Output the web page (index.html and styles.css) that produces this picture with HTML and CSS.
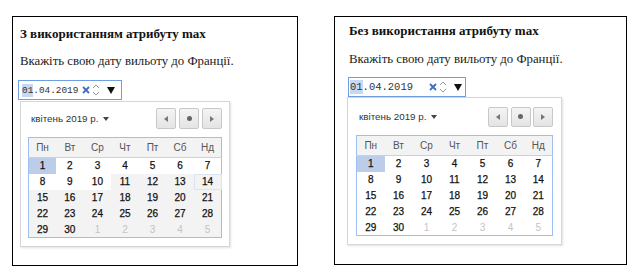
FILE: index.html
```html
<!DOCTYPE html>
<html lang="uk">
<head>
<meta charset="utf-8">
<link rel="stylesheet" href="styles.css">
</head>
<body>
<div class="page">
  <section class="panel panel-a">
    <h3 class="title">З використанням атрибуту max</h3>
    <p class="prompt">Вкажіть свою дату вильоту до Франції.</p>
    <div class="date-input">
      <span class="value"><span class="sel">01</span>.04.2019</span>
      <svg class="clear" width="8" height="8" viewBox="0 0 8 8"><path d="M1 1L7 7M7 1L1 7" stroke="#3d6fc4" stroke-width="1.8"/></svg>
      <svg class="spin" width="8" height="14" viewBox="0 0 8 14"><path d="M1 5L4 2L7 5M1 9L4 12L7 9" fill="none" stroke="#9a9a9a" stroke-width="1"/></svg>
      <svg class="drop" width="8" height="7" viewBox="0 0 8 7"><path d="M0 0H8L4 7Z" fill="#111"/></svg>
    </div>
    <div class="picker">
      <div class="picker-head">
        <span class="month">квітень 2019 р. <svg class="mcaret" width="6" height="4" viewBox="0 0 6 4"><path d="M0 0H6L3 4Z" fill="#444"/></svg></span>
        <div class="nav">
          <span class="nbtn"><svg width="4" height="6" viewBox="0 0 4 6"><path d="M4 0V6L0 3Z" fill="#777"/></svg></span>
          <span class="nbtn"><svg width="5" height="5" viewBox="0 0 5 5"><circle cx="2.5" cy="2.5" r="2.5" fill="#666"/></svg></span>
          <span class="nbtn"><svg width="4" height="6" viewBox="0 0 4 6"><path d="M0 0V6L4 3Z" fill="#777"/></svg></span>
        </div>
      </div>
      <table class="cal">
        <thead><tr><th>Пн</th><th>Вт</th><th>Ср</th><th>Чт</th><th>Пт</th><th>Сб</th><th>Нд</th></tr></thead>
        <tbody>
          <tr><td class="cur">1</td><td>2</td><td>3</td><td>4</td><td>5</td><td>6</td><td>7</td></tr>
          <tr><td>8</td><td>9</td><td>10</td><td class="off">11</td><td class="off">12</td><td class="off">13</td><td class="off hov">14</td></tr>
          <tr><td class="off">15</td><td class="off">16</td><td class="off">17</td><td class="off">18</td><td class="off">19</td><td class="off">20</td><td class="off">21</td></tr>
          <tr><td class="off">22</td><td class="off">23</td><td class="off">24</td><td class="off">25</td><td class="off">26</td><td class="off">27</td><td class="off">28</td></tr>
          <tr><td class="off">29</td><td class="off">30</td><td class="off next">1</td><td class="off next">2</td><td class="off next">3</td><td class="off next">4</td><td class="off next">5</td></tr>
        </tbody>
      </table>
    </div>
  </section>

  <section class="panel panel-b">
    <h3 class="title">Без використання атрибуту max</h3>
    <p class="prompt">Вкажіть свою дату вильоту до Франції.</p>
    <div class="date-input">
      <span class="value"><span class="sel">01</span>.04.2019</span>
      <svg class="clear" width="8" height="8" viewBox="0 0 8 8"><path d="M1 1L7 7M7 1L1 7" stroke="#3d6fc4" stroke-width="1.8"/></svg>
      <svg class="spin" width="8" height="14" viewBox="0 0 8 14"><path d="M1 5L4 2L7 5M1 9L4 12L7 9" fill="none" stroke="#9a9a9a" stroke-width="1"/></svg>
      <svg class="drop" width="8" height="7" viewBox="0 0 8 7"><path d="M0 0H8L4 7Z" fill="#111"/></svg>
    </div>
    <div class="picker">
      <div class="picker-head">
        <span class="month">квітень 2019 р. <svg class="mcaret" width="6" height="4" viewBox="0 0 6 4"><path d="M0 0H6L3 4Z" fill="#444"/></svg></span>
        <div class="nav">
          <span class="nbtn"><svg width="4" height="6" viewBox="0 0 4 6"><path d="M4 0V6L0 3Z" fill="#777"/></svg></span>
          <span class="nbtn"><svg width="5" height="5" viewBox="0 0 5 5"><circle cx="2.5" cy="2.5" r="2.5" fill="#666"/></svg></span>
          <span class="nbtn"><svg width="4" height="6" viewBox="0 0 4 6"><path d="M0 0V6L4 3Z" fill="#777"/></svg></span>
        </div>
      </div>
      <table class="cal">
        <thead><tr><th>Пн</th><th>Вт</th><th>Ср</th><th>Чт</th><th>Пт</th><th>Сб</th><th>Нд</th></tr></thead>
        <tbody>
          <tr><td class="cur">1</td><td>2</td><td>3</td><td>4</td><td>5</td><td>6</td><td>7</td></tr>
          <tr><td>8</td><td>9</td><td>10</td><td>11</td><td>12</td><td>13</td><td>14</td></tr>
          <tr><td>15</td><td>16</td><td>17</td><td>18</td><td>19</td><td>20</td><td>21</td></tr>
          <tr><td>22</td><td>23</td><td>24</td><td>25</td><td>26</td><td>27</td><td>28</td></tr>
          <tr><td>29</td><td>30</td><td class="next">1</td><td class="next">2</td><td class="next">3</td><td class="next">4</td><td class="next">5</td></tr>
        </tbody>
      </table>
    </div>
  </section>
</div>
</body>
</html>
```

FILE: styles.css
```css
html, body {
  margin: 0;
  padding: 0;
  background: #fff;
}

.page {
  display: flex;
  align-items: flex-start;
  gap: 36px;
  padding: 16px 0 0 12px;
}

.panel {
  box-sizing: border-box;
  border: 1px solid #000;
  display: flex;
  flex-direction: column;
  align-items: flex-start;
}

.panel-a {
  width: 286px;
  height: 250px;
  padding: 9px 0 0 5px;
}

.panel-b {
  width: 293px;
  height: 249px;
  padding: 6px 0 0 13px;
}

.title {
  margin: 0;
  font-family: "Liberation Serif", serif;
  font-weight: bold;
  font-size: 13px;
  line-height: 16px;
  color: #111;
}

.prompt {
  margin: 0;
  font-family: "Liberation Serif", serif;
  font-size: 12.8px;
  line-height: 16px;
  color: #222;
}

.panel-a .title, .panel-a .prompt { margin-left: 2px; }
.panel-a .prompt { margin-top: 11px; }
.panel-a .date-input { margin-top: 11px; }

.panel-b .title, .panel-b .prompt { margin-left: 1px; }
.panel-b .prompt { margin-top: 12px; }
.panel-b .date-input { margin-top: 10px; }

.date-input {
  box-sizing: border-box;
  height: 20px;
  border: 1px solid #6f9ee3;
  display: flex;
  align-items: center;
  font-family: "Liberation Mono", monospace;
  color: #333;
}

.panel-a .date-input { width: 104px; padding-left: 3px; font-size: 9.4px; }
.panel-b .date-input { width: 118px; padding-left: 1px; font-size: 10.5px; }

.value { display: inline-block; }
.panel-a .value { width: 60px; }
.panel-b .value { width: 79px; }

.sel {
  background: #c6d8f3;
  padding: 1px 0;
}

.clear { display: block; }
.spin { display: block; margin-left: 2px; }
.drop { display: block; margin-left: 7px; }

.picker {
  box-sizing: border-box;
  border: 1px solid #d6d6d6;
  box-shadow: 1px 1px 2px rgba(0, 0, 0, 0.12);
  background: #fff;
  font-family: "Liberation Sans", Arial, sans-serif;
}

.panel-a .picker { width: 210px; margin: 1px 0 0 2px; padding: 6px 7px 8px 7px; }
.panel-b .picker { width: 215px; margin: 0 0 0 -1px; padding: 8px 8px 8px 8px; }

.picker-head {
  display: flex;
  align-items: center;
  justify-content: space-between;
  height: 21px;
  margin-bottom: 8px;
}

.month {
  font-size: 9.8px;
  color: #333;
  padding-left: 3px;
  display: flex;
  align-items: center;
  gap: 5px;
}

.nav {
  display: flex;
  gap: 3px;
}
.panel-b .nav { gap: 2.5px; }

.nbtn {
  box-sizing: border-box;
  width: 20px;
  height: 21px;
  border: 1px solid #c8c8c8;
  border-radius: 2px;
  background: linear-gradient(#f4f4f4, #e4e4e4);
  display: flex;
  align-items: center;
  justify-content: center;
}
.panel-b .nbtn { height: 20px; }

.nbtn svg { display: block; }

.cal {
  border-collapse: collapse;
  table-layout: fixed;
  border: 1px solid #9fbff0;
  font-size: 10px;
}
.panel-a .cal { width: 194px; }
.panel-b .cal { width: 197px; }

.cal th {
  height: 19px;
  padding: 0;
  font-weight: normal;
  color: #555;
  background: #f3f3f3;
  border-bottom: 1px solid #d0d0d0;
}

.cal td {
  height: 16px;
  padding: 0;
  text-align: center;
  font-weight: normal;
  color: #111;
  -webkit-text-stroke: 0.25px #111;
  box-sizing: border-box;
}

.cal td.cur { background: #bccde9; }
.cal td.off { background: #f3f3f3; }
.cal td.hov { outline: 1px solid #dbe4f0; outline-offset: -1px; }
.cal td.next { color: #c4c4c4; -webkit-text-stroke: 0; }
```
